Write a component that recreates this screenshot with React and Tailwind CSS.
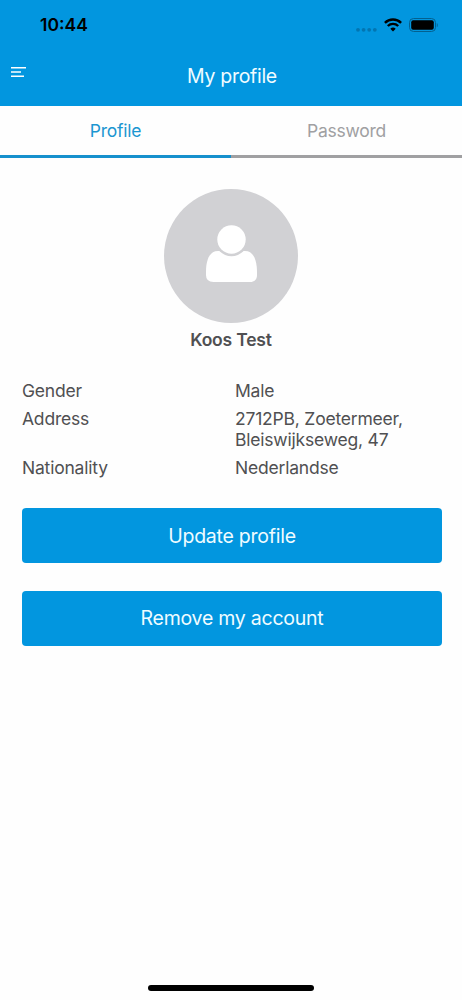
import { useState } from 'react';

const TABS = ['Profile', 'Password'];

const DETAILS = [
  { label: 'Gender', lines: ['Male'] },
  { label: 'Address', lines: ['2712PB, Zoetermeer,', 'Bleiswijkseweg, 47'] },
  { label: 'Nationality', lines: ['Nederlandse'] },
];

function StatusBar() {
  return (
    <div className="h-[50px] pl-10 pr-[23px] flex items-center justify-between text-black">
      <span className="text-[17.5px] font-semibold leading-none">10:44</span>
      <div className="flex items-center">
        <svg className="w-[21px] h-4 mr-[7px]" viewBox="0 0 21 16" fill="#0275b1">
          <circle cx="2" cy="12.8" r="1.9" />
          <circle cx="7.6" cy="12.8" r="1.9" />
          <circle cx="13.2" cy="12.8" r="1.9" />
          <circle cx="18.8" cy="12.8" r="1.9" />
        </svg>
        <svg className="w-[18px] h-4 mr-[7px]" viewBox="0 0 18 16">
          <g fill="none" stroke="currentColor" strokeWidth="2.4">
            <path d="M0.9 5.9a11.5 11.5 0 0 1 16.2 0" />
            <path d="M3.8 9a7.4 7.4 0 0 1 10.4 0" />
          </g>
          <path d="M9 14.6L6.3 11.8a3.8 3.8 0 0 1 5.4 0z" fill="currentColor" />
        </svg>
        <svg className="w-[30px] h-4" viewBox="0 0 30 16">
          <rect x="0.5" y="1.5" width="26" height="13" rx="4" fill="none" stroke="#03608f" />
          <rect x="2.2" y="3.2" width="22.6" height="9.6" rx="2" fill="currentColor" />
          <path d="M27.8 6v4.2c1.3-.5 1.3-3.7 0-4.2z" fill="#03608f" />
        </svg>
      </div>
    </div>
  );
}

function Header() {
  return (
    <div className="h-14 grid grid-cols-[1fr_auto_1fr] items-start">
      <button className="w-fit pl-[11px] pt-4" aria-label="Menu">
        <svg className="w-4 h-3" viewBox="0 0 16 12" stroke="#ffffff" strokeWidth="1.5">
          <path d="M0 1.7h15M0 6h10M0 10.3h13" />
        </svg>
      </button>
      <h1 className="pt-[13px] pl-0.5 text-[19.5px] leading-[26px] tracking-[-0.3px] text-[#f0fcff]">My profile</h1>
    </div>
  );
}

function Avatar() {
  return (
    <svg className="w-[134px] h-[134px]" viewBox="0 0 134 134">
      <circle cx="67" cy="67" r="67" fill="#d1d1d4" />
      <path
        d="M54 62C45 62 42 72 42 83v3q0 7 7.500 7h36q7.500 0 7.500-7v-3C93 72 90 62 81 62z"
        fill="#ffffff"
      />
      <circle cx="67.500" cy="50.500" r="16.700" fill="#d1d1d4" />
      <circle cx="67.500" cy="50.500" r="14.200" fill="#ffffff" />
    </svg>
  );
}

function ActionButton({ children }) {
  return (
    <button className="w-full h-[55px] pt-0.5 rounded bg-[#0296df] text-[#f0fcff] text-[19.5px] tracking-[-0.25px]">
      {children}
    </button>
  );
}

export default function App() {
  const [activeTab, setActiveTab] = useState('Profile');

  return (
    <div className="w-full h-screen flex flex-col bg-[#fefefe] overflow-hidden font-['Inter','Liberation_Sans',sans-serif] text-[#505052]">
      <header className="bg-[#0296df]">
        <StatusBar />
        <Header />
      </header>

      <nav className="flex h-[52px]">
        {TABS.map((tab) => (
          <button
            key={tab}
            onClick={() => setActiveTab(tab)}
            className={`flex-1 pt-px text-[17.5px] tracking-[-0.25px] border-b-[3px] ${
              tab === activeTab ? 'text-[#1b96d1] border-[#1690cd]' : 'text-[#a0a0a2] border-[#a0a0a2]'
            }`}
          >
            {tab}
          </button>
        ))}
      </nav>

      <main className="flex-1 flex flex-col px-[22px] pt-[31px]">
        <div className="flex flex-col items-center">
          <Avatar />
          <h2 className="mt-1.5 text-[17.5px] leading-[21px] tracking-[-0.2px] font-semibold">Koos Test</h2>
        </div>

        <dl className="mt-[30px] flex flex-col gap-[7px] text-[17.5px] leading-[21px] tracking-[-0.2px]">
          {DETAILS.map(({ label, lines }) => (
            <div key={label} className="grid grid-cols-[213px_1fr]">
              <dt>{label}</dt>
              <dd>
                {lines.map((line) => (
                  <div key={line}>{line}</div>
                ))}
              </dd>
            </div>
          ))}
        </dl>

        <div className="w-[420px] mt-[30px] flex flex-col gap-[27.5px]">
          <ActionButton>Update profile</ActionButton>
          <ActionButton>Remove my account</ActionButton>
        </div>
      </main>

      {/* Home indicator */}
      <div className="w-[166px] h-1.5 mx-auto mb-[9px] rounded-full bg-black" />
    </div>
  );
}
